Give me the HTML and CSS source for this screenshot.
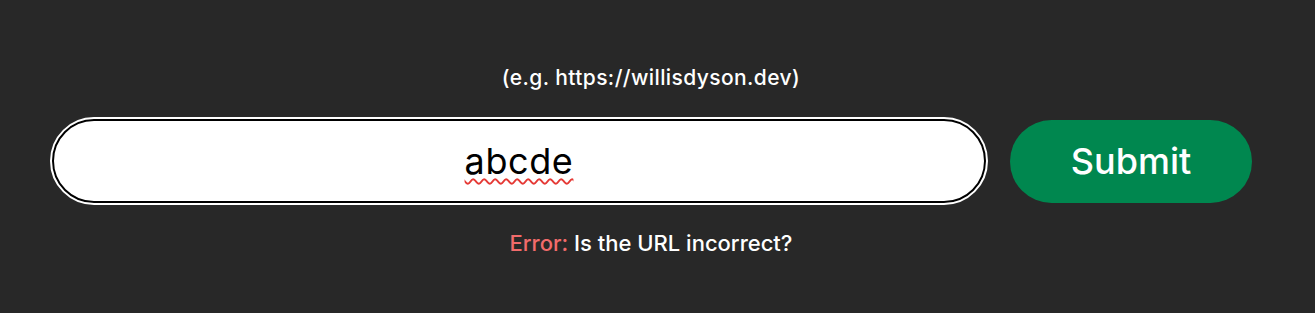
FILE: index.html
```html
<!DOCTYPE html>
<html lang="en">
<head>
<meta charset="utf-8">
<title>URL check</title>
<link rel="stylesheet" href="styles.css">
</head>
<body>
<main class="page">
  <p class="hint">(e.g. https://willisdyson.dev)</p>
  <form class="row">
    <div class="field"><span class="value">abcde</span></div>
    <button class="submit" type="button">Submit</button>
  </form>
  <p class="error"><span class="label">Error:</span> Is the URL incorrect?</p>
</main>
</body>
</html>
```
FILE: styles.css
```css
html, body {
  margin: 0;
  padding: 0;
  background: #282828;
}
body {
  font-family: "Inter", "Open Sans", sans-serif;
  color: #ffffff;
  width: 1315px;
  height: 313px;
  overflow: hidden;
}
.page {
  padding: 64px 63px 0 50px;
  display: flex;
  flex-direction: column;
  align-items: center;
}
.hint {
  margin: 0;
  font-size: 21px;
  line-height: 28px;
  font-weight: 500;
  letter-spacing: 0.4px;
}
.row {
  margin: 25px 0 0 0;
  display: flex;
  align-items: center;
  gap: 22px;
  width: 100%;
}
.field {
  flex: 1;
  height: 84px;
  box-sizing: border-box;
  background: #ffffff;
  border: 2px solid #000000;
  border-radius: 44px;
  outline: 2px solid #ffffff;
  margin: 2px;
  display: flex;
  align-items: center;
  justify-content: center;
  color: #000000;
  font-size: 36px;
  letter-spacing: 0.6px;
}
.value {
  text-decoration: underline wavy #e53935;
  text-decoration-thickness: 1.5px;
  text-underline-offset: 4px;
}
.submit {
  width: 242px;
  height: 83px;
  border: none;
  border-radius: 42px;
  background: #00874f;
  color: #ffffff;
  font-family: inherit;
  font-size: 36px;
  font-weight: 500;
  padding: 0;
}
.error {
  margin: 24px 0 0 0;
  font-size: 22px;
  line-height: 28px;
  font-weight: 500;
}
.label {
  color: #f26b6b;
}
```
